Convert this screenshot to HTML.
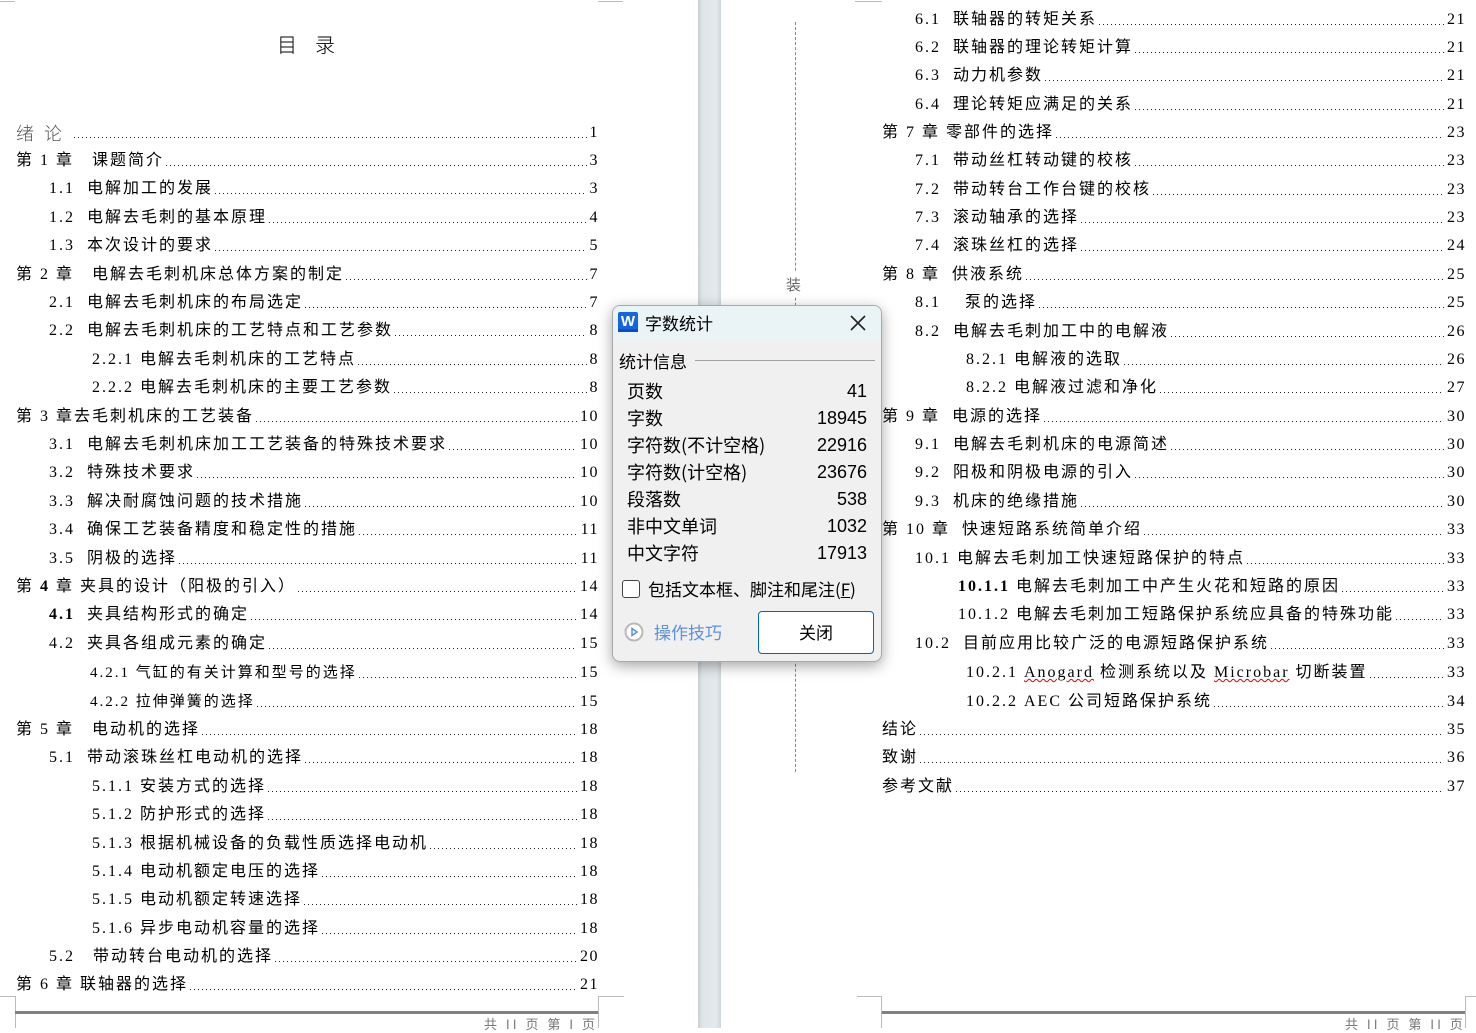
<!DOCTYPE html>
<html><head><meta charset="utf-8">
<style>
*{margin:0;padding:0;box-sizing:border-box}
body{width:1476px;height:1028px;overflow:hidden;background:#fff;position:relative;font-family:"Liberation Serif","Noto Sans CJK SC",serif;color:#000}
.strip{position:absolute;left:698px;top:0;width:23px;height:1028px;background:linear-gradient(to right,#c9d0d3,#dfe6e9 20%,#e3e9ec 80%,#cfd6d9)}
.r{position:absolute;height:22px;display:flex;align-items:flex-end;font-size:16px;letter-spacing:2px;white-space:nowrap;line-height:20px}
.r .d{flex:1;height:1px;margin:0 3px 5px 2px;background:linear-gradient(to right,#222 1.2px,transparent 1.2px) repeat-x;background-size:4px 1px}
.r .n{letter-spacing:1.5px}
.L{right:877px}
.R{right:10px}
.cj{font-family:"Noto Sans CJK SC",sans-serif;font-weight:300}
.s{font-size:15px}
b{font-weight:bold}
.u{text-decoration:underline wavy #d00;text-decoration-thickness:1px}
.dlg{position:absolute;left:612px;top:305px;width:270px;height:357px;background:#f0f0f0;border:1px solid #a9a9a9;border-radius:8px;box-shadow:0 4px 14px rgba(0,0,0,.35);font-family:"Noto Sans CJK SC",sans-serif;overflow:hidden}
.tb{height:36px;background:#eaf3f6;position:relative}
.w{position:absolute;left:5px;top:6px;width:20px;height:20px;background:#1565e0;border-radius:2px;color:#fff;font:bold 15px "Liberation Sans",sans-serif;text-align:center;line-height:19px}
.w:after{content:"";position:absolute;left:0;bottom:0;width:20px;height:3px;background:#0b4fc0}
.dlg .t{position:absolute;font-size:17px;line-height:20px;white-space:nowrap}
.row{position:absolute;left:14px;width:240px;font-size:18px;line-height:22px;display:flex;justify-content:space-between}
.row span:last-child{font-family:"Liberation Sans",sans-serif}
</style></head><body>
<div class="strip"></div>
<div style="position:absolute;left:0;top:0;width:15px;height:2px;border-bottom:1px solid #bbb"></div>
<div style="position:absolute;left:598px;top:0;width:25px;height:2px;border-bottom:1px solid #bbb"></div>
<div style="position:absolute;left:0;top:996px;width:15px;height:1px;background:#bbb"></div>
<div style="position:absolute;left:15px;top:996px;width:1px;height:32px;background:#bbb"></div>
<div style="position:absolute;left:598px;top:996px;width:26px;height:1px;background:#bbb"></div>
<div style="position:absolute;left:598px;top:996px;width:1px;height:32px;background:#bbb"></div>
<div style="position:absolute;left:15px;top:1011px;width:583px;height:3px;background:#808080"></div>
<div style="position:absolute;left:484px;top:1014px;font-size:13px;color:#777;font-family:'Noto Sans CJK SC',sans-serif;letter-spacing:3px">共 II 页 第 I 页</div>
<div style="position:absolute;left:857px;top:996px;width:25px;height:1px;background:#bbb"></div>
<div style="position:absolute;left:881px;top:996px;width:1px;height:32px;background:#bbb"></div>
<div style="position:absolute;left:1465px;top:996px;width:11px;height:1px;background:#bbb"></div>
<div style="position:absolute;left:1465px;top:996px;width:1px;height:32px;background:#bbb"></div>
<div style="position:absolute;left:882px;top:1011px;width:583px;height:3px;background:#808080"></div>
<div style="position:absolute;left:1345px;top:1014px;font-size:13px;color:#777;font-family:'Noto Sans CJK SC',sans-serif;letter-spacing:3px">共 II 页 第 II 页</div>
<div style="position:absolute;left:855px;top:0;width:27px;height:2px;border-bottom:1px solid #bbb"></div>
<div style="position:absolute;left:795px;top:22px;height:750px;border-left:1px dashed #888"></div>
<div style="position:absolute;left:786px;top:272px;background:#fff;font-size:15px;color:#666;font-family:'Noto Sans CJK SC',sans-serif;padding:2px 0">装</div>

<div style="position:absolute;left:277px;top:29px;font-size:20px;letter-spacing:18px" class="cj">目录</div>

<div class="r L" style="left:16px;top:121px"><span style="font-size:18px;letter-spacing:10px;color:#555" class="cj">绪论</span><span class="d"></span><span class="n">1</span></div>
<div class="r L" style="left:16px;top:149px">第 1 章&nbsp;&nbsp;&nbsp;课题简介<span class="d"></span><span class="n">3</span></div>
<div class="r L" style="left:49px;top:177px">1.1&nbsp;&nbsp;电解加工的发展<span class="d"></span><span class="n">3</span></div>
<div class="r L" style="left:49px;top:206px">1.2&nbsp;&nbsp;电解去毛刺的基本原理<span class="d"></span><span class="n">4</span></div>
<div class="r L" style="left:49px;top:234px">1.3&nbsp;&nbsp;本次设计的要求<span class="d"></span><span class="n">5</span></div>
<div class="r L" style="left:16px;top:263px">第 2 章&nbsp;&nbsp;&nbsp;电解去毛刺机床总体方案的制定<span class="d"></span><span class="n">7</span></div>
<div class="r L" style="left:49px;top:291px">2.1&nbsp;&nbsp;电解去毛刺机床的布局选定<span class="d"></span><span class="n">7</span></div>
<div class="r L" style="left:49px;top:319px">2.2&nbsp;&nbsp;电解去毛刺机床的工艺特点和工艺参数<span class="d"></span><span class="n">8</span></div>
<div class="r L" style="left:92px;top:348px">2.2.1&nbsp;电解去毛刺机床的工艺特点<span class="d"></span><span class="n">8</span></div>
<div class="r L" style="left:92px;top:376px">2.2.2&nbsp;电解去毛刺机床的主要工艺参数<span class="d"></span><span class="n">8</span></div>
<div class="r L" style="left:16px;top:405px">第 3 章去毛刺机床的工艺装备<span class="d"></span><span class="n">10</span></div>
<div class="r L" style="left:49px;top:433px">3.1&nbsp;&nbsp;电解去毛刺机床加工工艺装备的特殊技术要求<span class="d"></span><span class="n">10</span></div>
<div class="r L" style="left:49px;top:461px">3.2&nbsp;&nbsp;特殊技术要求<span class="d"></span><span class="n">10</span></div>
<div class="r L" style="left:49px;top:490px">3.3&nbsp;&nbsp;解决耐腐蚀问题的技术措施<span class="d"></span><span class="n">10</span></div>
<div class="r L" style="left:49px;top:518px">3.4&nbsp;&nbsp;确保工艺装备精度和稳定性的措施<span class="d"></span><span class="n">11</span></div>
<div class="r L" style="left:49px;top:547px">3.5&nbsp;&nbsp;阴极的选择<span class="d"></span><span class="n">11</span></div>
<div class="r L" style="left:16px;top:575px">第&nbsp;<b>4</b>&nbsp;章&nbsp;夹具的设计（阳极的引入）<span class="d"></span><span class="n">14</span></div>
<div class="r L" style="left:49px;top:603px"><b>4.1</b>&nbsp;&nbsp;夹具结构形式的确定<span class="d"></span><span class="n">14</span></div>
<div class="r L" style="left:49px;top:632px">4.2&nbsp;&nbsp;夹具各组成元素的确定<span class="d"></span><span class="n">15</span></div>
<div class="r L s" style="left:90px;top:661px">4.2.1&nbsp;气缸的有关计算和型号的选择<span class="d"></span><span class="n" style="font-size:16px">15</span></div>
<div class="r L s" style="left:90px;top:690px">4.2.2&nbsp;拉伸弹簧的选择<span class="d"></span><span class="n" style="font-size:16px">15</span></div>
<div class="r L" style="left:16px;top:718px">第 5 章&nbsp;&nbsp;&nbsp;电动机的选择<span class="d"></span><span class="n">18</span></div>
<div class="r L" style="left:49px;top:746px">5.1&nbsp;&nbsp;带动滚珠丝杠电动机的选择<span class="d"></span><span class="n">18</span></div>
<div class="r L" style="left:92px;top:775px">5.1.1&nbsp;安装方式的选择<span class="d"></span><span class="n">18</span></div>
<div class="r L" style="left:92px;top:803px">5.1.2&nbsp;防护形式的选择<span class="d"></span><span class="n">18</span></div>
<div class="r L" style="left:92px;top:832px">5.1.3&nbsp;根据机械设备的负载性质选择电动机<span class="d"></span><span class="n">18</span></div>
<div class="r L" style="left:92px;top:860px">5.1.4&nbsp;电动机额定电压的选择<span class="d"></span><span class="n">18</span></div>
<div class="r L" style="left:92px;top:888px">5.1.5&nbsp;电动机额定转速选择<span class="d"></span><span class="n">18</span></div>
<div class="r L" style="left:92px;top:917px">5.1.6&nbsp;异步电动机容量的选择<span class="d"></span><span class="n">18</span></div>
<div class="r L" style="left:49px;top:945px">5.2&nbsp;&nbsp;&nbsp;带动转台电动机的选择<span class="d"></span><span class="n">20</span></div>
<div class="r L" style="left:16px;top:973px">第 6 章&nbsp;联轴器的选择<span class="d"></span><span class="n">21</span></div>

<div class="r R" style="left:915px;top:8px">6.1&nbsp;&nbsp;联轴器的转矩关系<span class="d"></span><span class="n">21</span></div>
<div class="r R" style="left:915px;top:36px">6.2&nbsp;&nbsp;联轴器的理论转矩计算<span class="d"></span><span class="n">21</span></div>
<div class="r R" style="left:915px;top:64px">6.3&nbsp;&nbsp;动力机参数<span class="d"></span><span class="n">21</span></div>
<div class="r R" style="left:915px;top:93px">6.4&nbsp;&nbsp;理论转矩应满足的关系<span class="d"></span><span class="n">21</span></div>
<div class="r R" style="left:882px;top:121px">第 7 章&nbsp;零部件的选择<span class="d"></span><span class="n">23</span></div>
<div class="r R" style="left:915px;top:149px">7.1&nbsp;&nbsp;带动丝杠转动键的校核<span class="d"></span><span class="n">23</span></div>
<div class="r R" style="left:915px;top:178px">7.2&nbsp;&nbsp;带动转台工作台键的校核<span class="d"></span><span class="n">23</span></div>
<div class="r R" style="left:915px;top:206px">7.3&nbsp;&nbsp;滚动轴承的选择<span class="d"></span><span class="n">23</span></div>
<div class="r R" style="left:915px;top:234px">7.4&nbsp;&nbsp;滚珠丝杠的选择<span class="d"></span><span class="n">24</span></div>
<div class="r R" style="left:882px;top:263px">第 8 章&nbsp;&nbsp;供液系统<span class="d"></span><span class="n">25</span></div>
<div class="r R" style="left:915px;top:291px">8.1&nbsp;&nbsp;&nbsp;&nbsp;泵的选择<span class="d"></span><span class="n">25</span></div>
<div class="r R" style="left:915px;top:320px">8.2&nbsp;&nbsp;电解去毛刺加工中的电解液<span class="d"></span><span class="n">26</span></div>
<div class="r R" style="left:966px;top:348px">8.2.1&nbsp;电解液的选取<span class="d"></span><span class="n">26</span></div>
<div class="r R" style="left:966px;top:376px">8.2.2&nbsp;电解液过滤和净化<span class="d"></span><span class="n">27</span></div>
<div class="r R" style="left:882px;top:405px">第 9 章&nbsp;&nbsp;电源的选择<span class="d"></span><span class="n">30</span></div>
<div class="r R" style="left:915px;top:433px">9.1&nbsp;&nbsp;电解去毛刺机床的电源简述<span class="d"></span><span class="n">30</span></div>
<div class="r R" style="left:915px;top:461px">9.2&nbsp;&nbsp;阳极和阴极电源的引入<span class="d"></span><span class="n">30</span></div>
<div class="r R" style="left:915px;top:490px">9.3&nbsp;&nbsp;机床的绝缘措施<span class="d"></span><span class="n">30</span></div>
<div class="r R" style="left:882px;top:518px">第 10 章&nbsp;&nbsp;快速短路系统简单介绍<span class="d"></span><span class="n">33</span></div>
<div class="r R" style="left:915px;top:547px">10.1&nbsp;电解去毛刺加工快速短路保护的特点<span class="d"></span><span class="n">33</span></div>
<div class="r R" style="left:958px;top:575px"><b>10.1.1</b>&nbsp;电解去毛刺加工中产生火花和短路的原因<span class="d"></span><span class="n">33</span></div>
<div class="r R" style="left:958px;top:603px">10.1.2&nbsp;电解去毛刺加工短路保护系统应具备的特殊功能<span class="d"></span><span class="n">33</span></div>
<div class="r R" style="left:915px;top:632px">10.2&nbsp;&nbsp;目前应用比较广泛的电源短路保护系统<span class="d"></span><span class="n">33</span></div>
<div class="r R" style="left:966px;top:661px">10.2.1&nbsp;<span class="u">Anogard</span>&nbsp;检测系统以及&nbsp;<span class="u">Microbar</span>&nbsp;切断装置<span class="d"></span><span class="n">33</span></div>
<div class="r R" style="left:966px;top:690px">10.2.2&nbsp;AEC&nbsp;公司短路保护系统<span class="d"></span><span class="n">34</span></div>
<div class="r R" style="left:882px;top:718px">结论<span class="d"></span><span class="n">35</span></div>
<div class="r R" style="left:882px;top:746px">致谢<span class="d"></span><span class="n">36</span></div>
<div class="r R" style="left:882px;top:775px">参考文献<span class="d"></span><span class="n">37</span></div>

<div class="dlg">
  <div class="tb">
    <div class="w">W</div>
    <div class="t" style="left:32px;top:7px">字数统计</div>
    <svg style="position:absolute;left:236px;top:8px" width="18" height="18" viewBox="0 0 18 18"><path d="M2 2L16 16M16 2L2 16" stroke="#222" stroke-width="1.6"/></svg>
  </div>
  <div class="t" style="left:6px;top:45px">统计信息</div>
  <div style="position:absolute;left:82px;top:54px;width:180px;height:1px;background:#a0a0a0"></div>
  <div class="row" style="top:74px"><span>页数</span><span>41</span></div>
  <div class="row" style="top:101px"><span>字数</span><span>18945</span></div>
  <div class="row" style="top:128px"><span>字符数(不计空格)</span><span>22916</span></div>
  <div class="row" style="top:155px"><span>字符数(计空格)</span><span>23676</span></div>
  <div class="row" style="top:182px"><span>段落数</span><span>538</span></div>
  <div class="row" style="top:209px"><span>非中文单词</span><span>1032</span></div>
  <div class="row" style="top:236px"><span>中文字符</span><span>17913</span></div>
  <div style="position:absolute;left:9px;top:274px;width:18px;height:18px;border:1.5px solid #444;border-radius:3px;background:#fff"></div>
  <div class="t" style="left:35px;top:273px;font-size:17px">包括文本框、脚注和尾注(<u>F</u>)</div>
  <svg style="position:absolute;left:11px;top:316px" width="20" height="20" viewBox="0 0 20 20"><circle cx="10" cy="10" r="8.5" fill="#fff" stroke="#b8b8b8" stroke-width="2"/><path d="M8 6.5L13 10L8 13.5Z" fill="none" stroke="#5b8fe0" stroke-width="1.5"/></svg>
  <div class="t" style="left:41px;top:316px;color:#5b8fe0;font-size:17px">操作技巧</div>
  <div style="position:absolute;left:145px;top:305px;width:116px;height:43px;background:#fff;border:1px solid #0067c0;border-radius:4px;font-size:17px;text-align:center;line-height:40px">关闭</div>
</div>
</body></html>
